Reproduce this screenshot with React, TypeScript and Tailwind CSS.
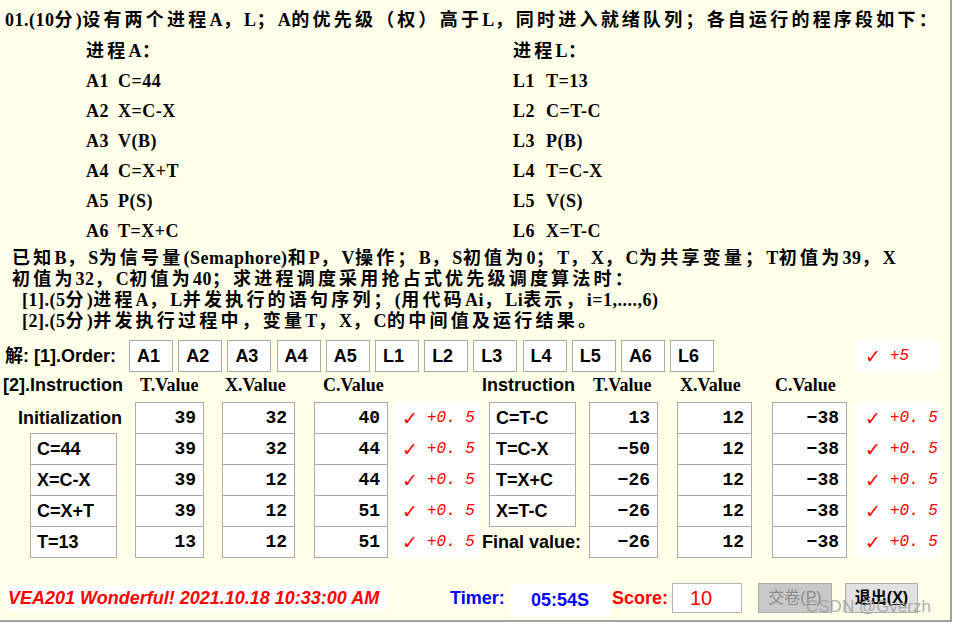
import React from "react"

const serif = "font-['Liberation_Serif','Noto_Sans_CJK_SC',serif]"
const sans = "font-['Liberation_Sans','Noto_Sans_CJK_SC',sans-serif]"
const mono = "font-['Liberation_Mono','DejaVu_Sans_Mono',monospace]"

const cjk = /([\u2e80-\uffef]+)/

// CJK runs are spaced wider than latin runs, like the original dialog
function Mixed({ text }: { text: string }) {
  return (
    <>
      {text.split(cjk).map((part, i) =>
        cjk.test(part) ? (
          <span key={i} className="tracking-[3.2px]">
            {part}
          </span>
        ) : (
          <span key={i}>{part}</span>
        )
      )}
    </>
  )
}

const procA = [
  ["A1", "C=44"],
  ["A2", "X=C-X"],
  ["A3", "V(B)"],
  ["A4", "C=X+T"],
  ["A5", "P(S)"],
  ["A6", "T=X+C"],
]
const procL = [
  ["L1", "T=13"],
  ["L2", "C=T-C"],
  ["L3", "P(B)"],
  ["L4", "T=C-X"],
  ["L5", "V(S)"],
  ["L6", "X=T-C"],
]

const order = ["A1", "A2", "A3", "A4", "A5", "L1", "L2", "L3", "L4", "L5", "A6", "L6"]

type Row = { ins: string | null; t: string; x: string; c: string }

const leftRows: Row[] = [
  { ins: null, t: "39", x: "32", c: "40" },
  { ins: "C=44", t: "39", x: "32", c: "44" },
  { ins: "X=C-X", t: "39", x: "12", c: "44" },
  { ins: "C=X+T", t: "39", x: "12", c: "51" },
  { ins: "T=13", t: "13", x: "12", c: "51" },
]
const rightRows: Row[] = [
  { ins: "C=T-C", t: "13", x: "12", c: "−38" },
  { ins: "T=C-X", t: "−50", x: "12", c: "−38" },
  { ins: "T=X+C", t: "−26", x: "12", c: "−38" },
  { ins: "X=T-C", t: "−26", x: "12", c: "−38" },
  { ins: null, t: "−26", x: "12", c: "−38" },
]

function Mark({ text }: { text: string }) {
  return (
    <div className="flex items-center h-full pl-[9px] text-[#ff0000]">
      <span className="text-[19px] italic font-['DejaVu_Sans',sans-serif] font-bold">✓</span>
      <span className={`${mono} italic text-[16px] ml-[9px]`}>{text}</span>
    </div>
  )
}

function Num({ v, w }: { v: string; w: string }) {
  return (
    <div
      className={`${w} h-[32px] bg-white border border-[#ababab] flex items-center justify-end pr-[7px] ${mono} font-bold text-[18px]`}
    >
      {v}
    </div>
  )
}

function InsBox({ v, cls }: { v: string; cls: string }) {
  return (
    <div className={`${cls} w-[87px] h-[32px] bg-white border border-[#ababab] flex items-center pl-[6px] ${sans} font-bold text-[18px]`}>
      {v}
    </div>
  )
}

export default function App() {
  return (
    <div className="w-[955px] h-[624px] bg-white relative overflow-hidden">
      <div className={`w-[952px] h-[622px] bg-[#ffffea] border-r-2 border-b-2 border-[#a0a0a0] text-black ${serif} font-bold text-[18px] tracking-[0.5px]`}>
        {/* title */}
        <div className="pt-[8px] h-[32px] leading-[24px] pl-[5px] whitespace-nowrap">
          <Mixed text="01.(10分)设有两个进程A，L；A的优先级（权）高于L，同时进入就绪队列；各自运行的程序段如下：" />
        </div>

        {/* program listings */}
        <div className="mt-[4px] flex pl-[86px]">
          <div className="w-[427px]">
            <div className="h-[30px] leading-[30px]">
              <Mixed text="进程A：" />
            </div>
            {procA.map(([k, s]) => (
              <div key={k} className="h-[30px] leading-[30px] flex">
                <span className="w-[32px]">{k}</span>
                <span>{s}</span>
              </div>
            ))}
          </div>
          <div>
            <div className="h-[30px] leading-[30px]">
              <Mixed text="进程L：" />
            </div>
            {procL.map(([k, s]) => (
              <div key={k} className="h-[30px] leading-[30px] flex">
                <span className="w-[33px]">{k}</span>
                <span>{s}</span>
              </div>
            ))}
          </div>
        </div>

        {/* problem text */}
        <div className="mt-[2px] whitespace-nowrap">
          <div className="h-[21px] leading-[21px] pl-[12px]">
            <Mixed text="已知B，S为信号量(Semaphore)和P，V操作；B，S初值为0；T，X，C为共享变量；T初值为39，X" />
          </div>
          <div className="h-[21px] leading-[21px] pl-[12px]">
            <Mixed text="初值为32，C初值为40；求进程调度采用抢占式优先级调度算法时：" />
          </div>
          <div className="h-[21px] leading-[21px] pl-[22px]">
            <Mixed text="[1].(5分)进程A，L并发执行的语句序列；(用代码Ai，Li表示，i=1,....,6)" />
          </div>
          <div className="h-[21px] leading-[21px] pl-[22px]">
            <Mixed text="[2].(5分)并发执行过程中，变量T，X，C的中间值及运行结果。" />
          </div>
        </div>

        {/* answer 1: order */}
        <div className={`mt-[8px] h-[32px] flex items-center ${sans} text-[18px] tracking-normal`}>
          <div className="w-[129px] pl-[5px] whitespace-nowrap">解: [1].Order:</div>
          <div className="flex gap-[5.2px]">
            {order.map((o, i) => (
              <div key={i} className="w-[44px] h-[32px] bg-white border border-[#ababab] flex items-center pl-[7px]">
                {o}
              </div>
            ))}
          </div>
          <div className="ml-[142px] w-[84px] h-[32px] bg-white font-normal">
            <Mark text="+5" />
          </div>
        </div>

        {/* answer 2: tables */}
        <div className="flex tracking-normal">
          {/* left half */}
          <div className="w-[480px]">
            <div className="h-[30px] pb-[4px] flex items-center whitespace-nowrap">
              <div className={`w-[135px] pl-[3px] ${sans}`}>[2].Instruction</div>
              <div className="w-[87px] pl-[5px]">T.Value</div>
              <div className="w-[92px] pl-[3px]">X.Value</div>
              <div className="w-[79px] pl-[9px]">C.Value</div>
            </div>
            {leftRows.map((r, i) => (
              <div key={i} className={`flex h-[32px] ${i > 0 ? "-mt-px" : ""}`}>
                <div className="w-[135px] flex items-center">
                  {r.ins ? (
                    <InsBox v={r.ins} cls="ml-[30px]" />
                  ) : (
                    <div className={`w-full text-right pr-[13px] ${sans}`}>Initialization</div>
                  )}
                </div>
                <Num v={r.t} w="w-[69px]" />
                <div className="w-[18px]" />
                <Num v={r.x} w="w-[73px]" />
                <div className="w-[19px]" />
                <Num v={r.c} w="w-[74px]" />
                <div className="w-[5px]" />
                <div className="w-[87px] bg-white font-normal">
                  <Mark text="+0. 5" />
                </div>
              </div>
            ))}
          </div>

          {/* right half */}
          <div className="w-[470px]">
            <div className="h-[30px] pb-[4px] flex items-center whitespace-nowrap">
              <div className={`w-[109px] pl-[2px] ${sans}`}>Instruction</div>
              <div className="w-[88px] pl-[4px]">T.Value</div>
              <div className="w-[95px] pl-[3px]">X.Value</div>
              <div className="w-[84px] pl-[3px]">C.Value</div>
            </div>
            {rightRows.map((r, i) => (
              <div key={i} className={`flex h-[32px] ${i > 0 ? "-mt-px" : ""}`}>
                <div className="w-[109px] flex items-center">
                  {r.ins ? (
                    <InsBox v={r.ins} cls="ml-[9px]" />
                  ) : (
                    <div className={`pl-[2px] whitespace-nowrap ${sans}`}>Final value:</div>
                  )}
                </div>
                <Num v={r.t} w="w-[69px]" />
                <div className="w-[19px]" />
                <Num v={r.x} w="w-[75px]" />
                <div className="w-[20px]" />
                <Num v={r.c} w="w-[75px]" />
                <div className="w-[9px]" />
                <div className="w-[85px] bg-white font-normal">
                  <Mark text="+0. 5" />
                </div>
              </div>
            ))}
          </div>
        </div>

        {/* status bar */}
        <div className={`mt-[24px] h-[32px] flex items-center ${sans} text-[18px] tracking-normal`}>
          <div className="ml-[6px] w-[381px] h-[24px] bg-white flex items-center pl-[2px] italic text-[#ff0000] whitespace-nowrap">
            VEA201 Wonderful! 2021.10.18 10:33:00 AM
          </div>
          <div className="ml-[63px] w-[60px] text-[#0000ff]">Timer:</div>
          <div className="w-[100px] h-[33px] mt-[4px] bg-white flex items-center justify-center text-[#0000ff]">05:54S</div>
          <div className="ml-[2px] w-[60px] text-[#ff0000]">Score:</div>
          <div className="w-[70px] h-[30px] bg-white border border-[#b4b4b4] flex items-center pl-[17px] text-[#ff0000] font-normal text-[20px]">
            10
          </div>
          <button className="ml-[16px] w-[74px] h-[30px] bg-[#c8c8c8] border border-[#adadad] text-[#8a8a8a] text-[16px] font-normal">
            交卷(<span className="underline">P</span>)
          </button>
          <button className="ml-[13px] w-[73px] h-[30px] bg-[#e1e1e1] border border-[#adadad] text-black text-[16px] font-bold">
            退出(<span className="underline">X</span>)
          </button>
        </div>
      </div>

      {/* screenshot watermark */}
      <div className={`absolute left-[806px] top-[594px] ${sans} text-[17px] text-[#9c9c9c] opacity-80 pointer-events-none`}>
        CSDN @Gverzh
      </div>
    </div>
  )
}
